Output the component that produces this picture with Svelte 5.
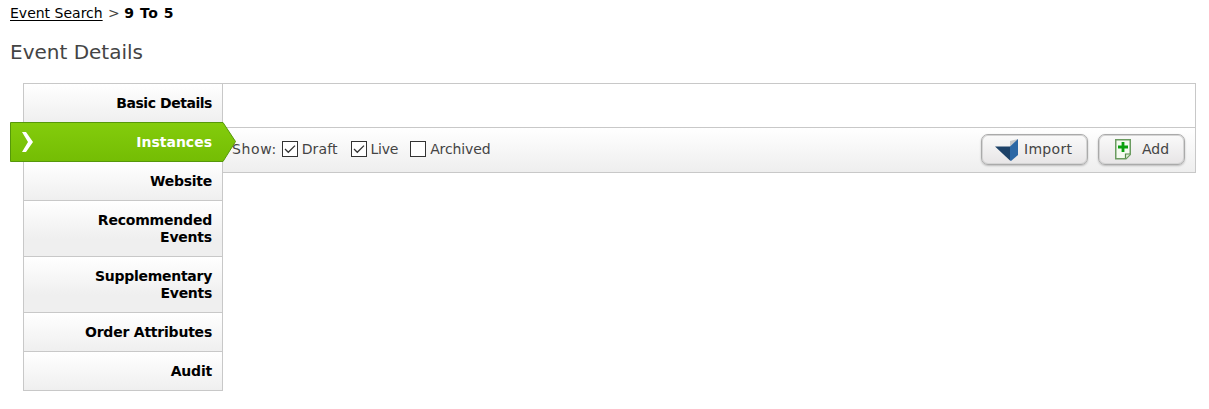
<script>
	const tabs = [
		{ id: 'basic', label: 'Basic Details', tracking: -0.45 },
		{ id: 'instances', label: 'Instances', tracking: 0 },
		{ id: 'website', label: 'Website', tracking: -0.25 },
		{ id: 'recommended', label: 'Recommended Events', tracking: -0.2 },
		{ id: 'supplementary', label: 'Supplementary Events', tracking: -0.28 },
		{ id: 'attributes', label: 'Order Attributes', tracking: -0.22 },
		{ id: 'audit', label: 'Audit', tracking: -0.2 }
	];

	let active = $state('instances');

	let filters = $state([
		{ id: 'draft', label: 'Draft', checked: true },
		{ id: 'live', label: 'Live', checked: true },
		{ id: 'archived', label: 'Archived', checked: false }
	]);
</script>

<main>
	<div class="breadcrumb">
		<a href="#search">Event Search</a> <span class="sep">&gt;</span> <strong>9 To 5</strong>
	</div>

	<h1>Event Details</h1>

	<div class="layout">
		<nav>
			{#each tabs as tab}
				<button class="tab" class:active={active === tab.id} onclick={() => (active = tab.id)}>
					{#if active === tab.id}
						<svg class="ribbon" width="228" height="40" viewBox="0 0 228 40">
							<defs>
								<linearGradient id="green" x1="0" y1="0" x2="0" y2="1">
									<stop offset="0" stop-color="#84cc0c" />
									<stop offset="1" stop-color="#74bd04" />
								</linearGradient>
							</defs>
							<path d="M.5 .5H213L225.500 19.500L213 39.500H.5Z" fill="url(#green)" stroke="#56980a" />
							<path d="M12 10H16L23 20L16 30H12L18 20Z" fill="#fff" />
						</svg>
					{/if}
					<span class="tab-label" style="letter-spacing: {tab.tracking}px">{tab.label}</span>
				</button>
			{/each}
		</nav>

		<section>
			<div class="blank"></div>
			<div class="toolbar">
				<span class="show">Show:</span>
				{#each filters as filter}
					<label class={filter.id}>
						<input type="checkbox" bind:checked={filter.checked} />
						<svg width="16" height="16" viewBox="0 0 16 16">
							<rect x=".5" y=".5" width="15" height="15" fill="#fff" stroke="#333" />
							{#if filter.checked}
								<path d="M3 8L6.300 11.300L13 4.600" fill="none" stroke="#333" stroke-width="1.300" />
							{/if}
						</svg>
						<span>{filter.label}</span>
					</label>
				{/each}

				<div class="actions">
					<button class="action import">
						<svg width="24" height="24" viewBox="0 0 24 24">
							<path d="M15 4L23 2V9H15Z" fill="#c6c8ca" />
							<path d="M0 9.500H15.500V24Z" fill="#1d4268" />
							<path d="M15 9.500L23 2V18L16 24L15 23Z" fill="#2b67a5" />
						</svg>
						<span>Import</span>
					</button>
					<button class="action add">
						<svg width="16" height="22" viewBox="0 0 16 22">
							<path d="M.75 1.750H15.250V16.500L11 20.750H.75Z" fill="#f4faf0" stroke="#6b9b60" stroke-width="1.500" />
							<path d="M15 16H10.500V20.500" fill="#e1efda" stroke="#548a48" stroke-width="1.200" />
							<path d="M8 4V14M3 9H13" stroke="#0aa00e" stroke-width="2.800" />
						</svg>
						<span>Add</span>
					</button>
				</div>
			</div>
		</section>
	</div>
</main>

<style>
	:global(body) {
		background: #fff;
	}

	main {
		padding: 5px 13px 0 10px;
		font-family: Verdana, 'DejaVu Sans', sans-serif;
		font-size: 14px;
		line-height: 17px;
		color: #444;
	}

	.breadcrumb a,
	.breadcrumb strong {
		color: #000;
	}

	.breadcrumb a {
		text-underline-offset: 2px;
	}

	.sep {
		margin-left: 1px;
	}

	.breadcrumb strong {
		letter-spacing: 0.55px;
	}

	h1 {
		margin: 18px 0;
		font-size: 20px;
		font-weight: 400;
		line-height: 25px;
	}

	.layout {
		display: flex;
		align-items: flex-start;
		margin-left: 13px;
	}

	nav {
		display: flex;
		flex-direction: column;
		flex: none;
		box-sizing: border-box;
		width: 200px;
		border: 1px solid #c8c8c8;
		border-bottom: none;
	}

	button {
		font-family: inherit;
		font-size: inherit;
		line-height: inherit;
		cursor: pointer;
	}

	.tab {
		position: relative;
		padding: 11px 10px 10px 50px;
		border: none;
		border-bottom: 1px solid #c8c8c8;
		background: linear-gradient(#fff, #efefef 38px);
		color: #000;
		font-weight: 700;
		text-align: right;
	}

	.tab.active {
		color: #fff;
		z-index: 1;
	}

	.ribbon {
		position: absolute;
		top: -1px;
		left: -14px;
	}

	.tab-label {
		position: relative;
	}

	section {
		flex: 1;
		border: 1px solid #c8c8c8;
		border-left: none;
	}

	.blank {
		height: 43px;
		border-bottom: 1px solid #c8c8c8;
	}

	.toolbar {
		display: flex;
		align-items: center;
		box-sizing: border-box;
		height: 44px;
		padding: 0 10px 2px 9px;
		background: linear-gradient(#fff, #eee);
	}

	.show {
		margin-right: 5px;
		letter-spacing: 0.6px;
	}

	label {
		display: flex;
		align-items: center;
		gap: 4px;
		margin-right: 13px;
	}

	.draft {
		letter-spacing: 0.1px;
	}

	.live {
		letter-spacing: -0.25px;
		margin-right: 12px;
	}

	.archived {
		letter-spacing: -0.1px;
	}

	label input {
		position: absolute;
		opacity: 0;
	}

	.actions {
		display: flex;
		gap: 10px;
		margin-left: auto;
	}

	.action {
		display: flex;
		align-items: center;
		box-sizing: border-box;
		height: 31px;
		padding: 0 13px;
		border: 1px solid #aaa;
		border-radius: 7px;
		background: linear-gradient(#fafafa, #e7e5e6);
		box-shadow: 0 1px 2px #bbb, inset 0 0 0 1px #d5d5d5;
		color: #444;
	}

	.import {
		width: 107px;
		gap: 5px;
		letter-spacing: 0.3px;
	}

	.add {
		width: 87px;
		padding-left: 16px;
		gap: 11px;
	}
</style>
